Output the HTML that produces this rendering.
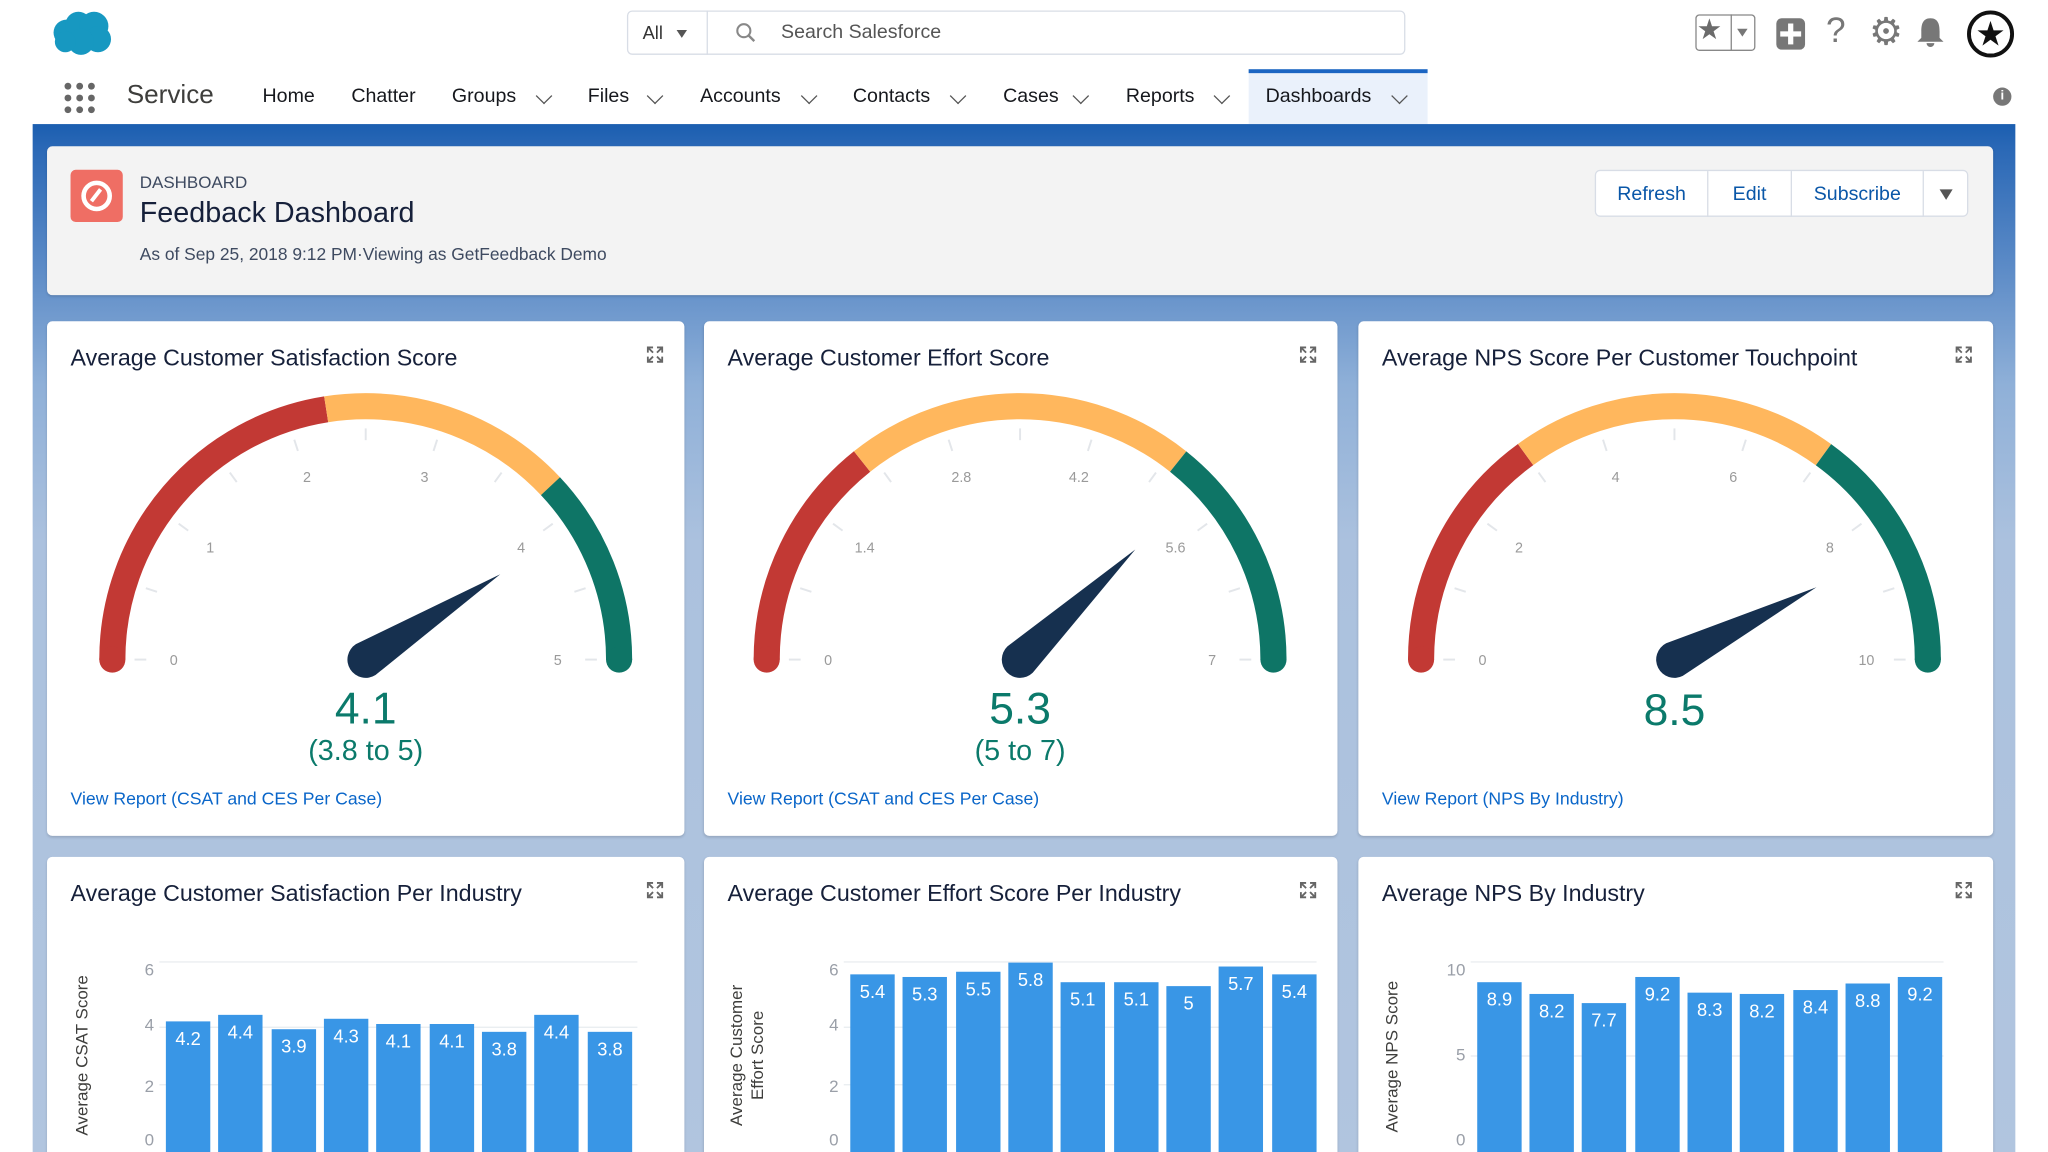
<!DOCTYPE html>
<html><head><meta charset="utf-8">
<style>
*{margin:0;padding:0;box-sizing:border-box}
html,body{width:2048px;height:1152px;overflow:hidden;background:#fff;font-family:"Liberation Sans",sans-serif}
#s{position:absolute;left:0;top:0;width:1568px;height:882px;transform:scale(1.30612);transform-origin:0 0;overflow:hidden;background:#fff}
.a{position:absolute;white-space:nowrap}
.nav{top:65px;font-size:15px;color:#16181d}
.chev{position:absolute;top:69px;width:9px;height:9px;border-right:1.6px solid #555;border-bottom:1.6px solid #555;transform:rotate(45deg)}
.card{position:absolute;background:#fff;border-radius:4px;box-shadow:0 1px 2px rgba(0,0,0,.15)}
.ttl{position:absolute;left:18px;top:18px;font-size:17.8px;color:#16203a}
.exp{position:absolute;top:19px;right:16px;width:13px;height:13px}
.lnk{position:absolute;left:18px;font-size:13.5px;color:#0a66c9}
.bar{position:absolute;width:34px;background:#3996e6;color:#fff;font-size:14px;text-align:center;padding-top:5px}
.yl{position:absolute;font-size:13px;color:#9a9fa8;text-align:right;width:20px}
.gl{position:absolute;height:1px;background:#e9ecf0}
.axt{position:absolute;font-size:13px;color:#3e3e3c;transform:rotate(-90deg);transform-origin:0 0;text-align:center;line-height:16px}
.btn{position:absolute;top:0;height:35px;line-height:35px;font-size:15px;color:#0a57a8;text-align:center}
</style></head><body><div id="s">
<svg class="a" style="left:38px;top:8px" width="50" height="36" viewBox="0 0 50 36"><g fill="#1798c1"><circle cx="13" cy="17" r="10"/><circle cx="22" cy="11" r="10"/><circle cx="34" cy="12" r="11"/><circle cx="37" cy="22" r="10"/><circle cx="24" cy="24" r="10"/><circle cx="12" cy="24" r="8"/></g></svg>
<div class="a" style="left:480px;top:8px;width:596px;height:34px;border:1px solid #d8dde6;border-radius:4px;background:#fff"></div>
<div class="a" style="left:541px;top:8px;width:1px;height:34px;background:#d8dde6"></div>
<div class="a" style="left:492px;top:17px;font-size:14px;color:#333">All</div>
<div class="a" style="left:518px;top:23px;width:0;height:0;border-left:4px solid transparent;border-right:4px solid transparent;border-top:6px solid #555"></div>
<svg class="a" style="left:563px;top:17px" width="16" height="16"><circle cx="6.5" cy="6.5" r="5" fill="none" stroke="#888" stroke-width="1.6"/><line x1="10" y1="10" x2="14.5" y2="14.5" stroke="#888" stroke-width="1.8"/></svg>
<div class="a" style="left:598px;top:16px;font-size:15px;color:#555">Search Salesforce</div>
<div class="a" style="left:1298px;top:11px;width:46px;height:28px;border:1px solid #888;border-radius:3px"></div>
<div class="a" style="left:1325px;top:11px;width:1px;height:28px;background:#888"></div>
<div class="a" style="left:1299px;top:10px;font-size:22px;color:#6b6b6b">★</div>
<div class="a" style="left:1330px;top:22px;border-left:4px solid transparent;border-right:4px solid transparent;border-top:6px solid #777"></div>
<div class="a" style="left:1360px;top:14px;width:22px;height:24px;background:#777;border-radius:4px"></div>
<div class="a" style="left:1369px;top:18px;width:4px;height:16px;background:#fff"></div>
<div class="a" style="left:1363px;top:24px;width:16px;height:4px;background:#fff"></div>
<div class="a" style="left:1398px;top:8px;font-size:27px;color:#777">?</div>
<div class="a" style="left:1431px;top:7px;font-size:29px;color:#777">⚙</div>
<svg class="a" style="left:1467px;top:13px" width="22" height="24"><path d="M11 1 C5 1 4 6 4 11 L4 16 L1 19 L21 19 L18 16 L18 11 C18 6 17 1 11 1Z M8 20 a3 3 0 0 0 6 0Z" fill="#777"/></svg>
<svg class="a" style="left:1505px;top:7px" width="38" height="38"><circle cx="19" cy="19" r="16.5" fill="#fff" stroke="#111" stroke-width="3"/><text x="19" y="28" text-anchor="middle" font-size="26" fill="#111">★</text></svg>
<svg class="a" style="left:49px;top:63px" width="24" height="24"><g fill="#666"><circle cx="3" cy="3" r="2.6"/><circle cx="12" cy="3" r="2.6"/><circle cx="21" cy="3" r="2.6"/><circle cx="3" cy="12" r="2.6"/><circle cx="12" cy="12" r="2.6"/><circle cx="21" cy="12" r="2.6"/><circle cx="3" cy="21" r="2.6"/><circle cx="12" cy="21" r="2.6"/><circle cx="21" cy="21" r="2.6"/></g></svg>
<div class="a" style="left:97px;top:62px;font-size:20px;color:#3e3e3c">Service</div>
<div class="a" style="left:956px;top:53px;width:137px;height:42px;background:#eaf1fb;border-top:3px solid #1b65c2"></div>
<div class="a nav" style="left:201px">Home</div>
<div class="a nav" style="left:269px">Chatter</div>
<div class="a nav" style="left:346px">Groups</div><div class="chev" style="left:412px"></div>
<div class="a nav" style="left:450px">Files</div><div class="chev" style="left:497px"></div>
<div class="a nav" style="left:536px">Accounts</div><div class="chev" style="left:615px"></div>
<div class="a nav" style="left:653px">Contacts</div><div class="chev" style="left:729px"></div>
<div class="a nav" style="left:768px">Cases</div><div class="chev" style="left:823px"></div>
<div class="a nav" style="left:862px">Reports</div><div class="chev" style="left:931px"></div>
<div class="a nav" style="left:969px">Dashboards</div><div class="chev" style="left:1067px"></div>
<div class="a" style="left:1526px;top:67px;width:14px;height:14px;border-radius:50%;background:#777;color:#fff;font-size:10px;font-weight:bold;text-align:center;line-height:14px">i</div>
<div class="a" style="left:25px;top:95px;width:1518px;height:800px;background:linear-gradient(#1b5eb0 0px,#2a68b6 18px,#5c8bc7 110px,#8fb0d8 200px,#abc1de 320px,#b1c5df 100%)"></div>
<div class="card" style="left:36px;top:112px;width:1490px;height:114px;background:#f3f3f3"></div>
<div class="a" style="left:54px;top:130px;width:40px;height:40px;background:#ef6e64;border-radius:4px"></div>
<svg class="a" style="left:54px;top:130px" width="40" height="40"><circle cx="20" cy="20" r="10" fill="none" stroke="#fff" stroke-width="3.5"/><path d="M16 24 L23 15" stroke="#fff" stroke-width="3"/></svg>
<div class="a" style="left:107px;top:132px;font-size:13px;color:#3e4a60">DASHBOARD</div>
<div class="a" style="left:107px;top:150px;font-size:22px;color:#16203a">Feedback Dashboard</div>
<div class="a" style="left:107px;top:187px;font-size:13.3px;color:#3e4a60">As of Sep 25, 2018 9:12 PM·Viewing as GetFeedback Demo</div>
<div class="a" style="left:1221px;top:130px;width:286px;height:36px;background:#fff;border:1px solid #d8dde6;border-radius:4px">
<div class="btn" style="left:0;width:85px">Refresh</div>
<div class="btn" style="left:85px;width:64px;border-left:1px solid #d8dde6">Edit</div>
<div class="btn" style="left:149px;width:101px;border-left:1px solid #d8dde6">Subscribe</div>
<div class="btn" style="left:250px;width:35px;border-left:1px solid #d8dde6"></div>
<div class="a" style="left:263px;top:14px;border-left:5px solid transparent;border-right:5px solid transparent;border-top:8px solid #555"></div>
</div>
<div class="card" style="left:36px;top:246px;width:488px;height:394px"><div class="ttl">Average Customer Satisfaction Score</div><svg class="exp" viewBox="0 0 13 13"><path d="M1 5V1h4M8 1h4v4M12 8v4H8M5 12H1V8M1 1l4 4M12 1L8 5M12 12L8 8M1 12l4-4" fill="none" stroke="#666" stroke-width="1.4"/></svg><div class="lnk" style="top:358px">View Report (CSAT and CES Per Case)</div></div>
<div class="card" style="left:539px;top:246px;width:485px;height:394px"><div class="ttl">Average Customer Effort Score</div><svg class="exp" viewBox="0 0 13 13"><path d="M1 5V1h4M8 1h4v4M12 8v4H8M5 12H1V8M1 1l4 4M12 1L8 5M12 12L8 8M1 12l4-4" fill="none" stroke="#666" stroke-width="1.4"/></svg><div class="lnk" style="top:358px">View Report (CSAT and CES Per Case)</div></div>
<div class="card" style="left:1040px;top:246px;width:486px;height:394px"><div class="ttl">Average NPS Score Per Customer Touchpoint</div><svg class="exp" viewBox="0 0 13 13"><path d="M1 5V1h4M8 1h4v4M12 8v4H8M5 12H1V8M1 1l4 4M12 1L8 5M12 12L8 8M1 12l4-4" fill="none" stroke="#666" stroke-width="1.4"/></svg><div class="lnk" style="top:358px">View Report (NPS By Industry)</div></div>
<svg class="a" style="left:0;top:0" width="1568" height="882">
<defs>
<g id="ticks" stroke="#e3e6ea" stroke-width="1.5">
<line x1="-177" y1="0" x2="-168" y2="0" transform="rotate(0)"/><line x1="-177" y1="0" x2="-168" y2="0" transform="rotate(18)"/><line x1="-177" y1="0" x2="-168" y2="0" transform="rotate(36)"/><line x1="-177" y1="0" x2="-168" y2="0" transform="rotate(54)"/><line x1="-177" y1="0" x2="-168" y2="0" transform="rotate(72)"/><line x1="-177" y1="0" x2="-168" y2="0" transform="rotate(90)"/><line x1="-177" y1="0" x2="-168" y2="0" transform="rotate(108)"/><line x1="-177" y1="0" x2="-168" y2="0" transform="rotate(126)"/><line x1="-177" y1="0" x2="-168" y2="0" transform="rotate(144)"/><line x1="-177" y1="0" x2="-168" y2="0" transform="rotate(162)"/><line x1="-177" y1="0" x2="-168" y2="0" transform="rotate(180)"/>
</g>
</defs>
<g font-family="Liberation Sans" font-size="11" fill="#9a9a9a" text-anchor="middle">
<g transform="translate(280,505)">
<use href="#ticks"/>
<g fill="none" stroke-width="20" transform="rotate(180)">
<circle r="194" stroke="#c23934" stroke-dasharray="274.3 3000"/>
<circle r="194" stroke="#ffb75d" stroke-dasharray="0 274.3 189 3000"/>
<circle r="194" stroke="#0e7566" stroke-dasharray="0 463.2 146.3 3000"/>
</g>
<circle cx="-194" cy="0" r="10" fill="#c23934"/><circle cx="194" cy="0" r="10" fill="#0e7566"/>
<text x="-147" y="4">0</text><text x="-119" y="-82">1</text><text x="-45" y="-136">2</text><text x="45" y="-136">3</text><text x="119" y="-82">4</text><text x="147" y="4">5</text>
<path d="M0 -14 L-122 0 L0 14 A14 14 0 0 0 0 -14Z" fill="#16304f" transform="rotate(147.6)"/>
<text y="49" font-size="34" fill="#0b7a6b">4.1</text>
<text y="77" font-size="22" fill="#0b7a6b">(3.8 to 5)</text>
</g>
<g transform="translate(781,505)">
<use href="#ticks"/>
<g fill="none" stroke-width="20" transform="rotate(180)">
<circle r="194" stroke="#c23934" stroke-dasharray="174.1 3000"/>
<circle r="194" stroke="#ffb75d" stroke-dasharray="0 174.1 261.3 3000"/>
<circle r="194" stroke="#0e7566" stroke-dasharray="0 435.4 174.1 3000"/>
</g>
<circle cx="-194" cy="0" r="10" fill="#c23934"/><circle cx="194" cy="0" r="10" fill="#0e7566"/>
<text x="-147" y="4">0</text><text x="-119" y="-82">1.4</text><text x="-45" y="-136">2.8</text><text x="45" y="-136">4.2</text><text x="119" y="-82">5.6</text><text x="147" y="4">7</text>
<path d="M0 -14 L-122 0 L0 14 A14 14 0 0 0 0 -14Z" fill="#16304f" transform="rotate(136.3)"/>
<text y="49" font-size="34" fill="#0b7a6b">5.3</text>
<text y="77" font-size="22" fill="#0b7a6b">(5 to 7)</text>
</g>
<g transform="translate(1282,505)">
<use href="#ticks"/>
<g fill="none" stroke-width="20" transform="rotate(180)">
<circle r="194" stroke="#c23934" stroke-dasharray="182.9 3000"/>
<circle r="194" stroke="#ffb75d" stroke-dasharray="0 182.9 243.8 3000"/>
<circle r="194" stroke="#0e7566" stroke-dasharray="0 426.7 182.9 3000"/>
</g>
<circle cx="-194" cy="0" r="10" fill="#c23934"/><circle cx="194" cy="0" r="10" fill="#0e7566"/>
<text x="-147" y="4">0</text><text x="-119" y="-82">2</text><text x="-45" y="-136">4</text><text x="45" y="-136">6</text><text x="119" y="-82">8</text><text x="147" y="4">10</text>
<path d="M0 -14 L-122 0 L0 14 A14 14 0 0 0 0 -14Z" fill="#16304f" transform="rotate(153)"/>
<text y="50" font-size="34" fill="#0b7a6b">8.5</text>
</g>
</g>
</svg>
<div class="card" style="left:36px;top:656px;width:488px;height:260px"><div class="ttl">Average Customer Satisfaction Per Industry</div><svg class="exp" viewBox="0 0 13 13"><path d="M1 5V1h4M8 1h4v4M12 8v4H8M5 12H1V8M1 1l4 4M12 1L8 5M12 12L8 8M1 12l4-4" fill="none" stroke="#666" stroke-width="1.4"/></svg></div>
<div class="card" style="left:539px;top:656px;width:485px;height:260px"><div class="ttl">Average Customer Effort Score Per Industry</div><svg class="exp" viewBox="0 0 13 13"><path d="M1 5V1h4M8 1h4v4M12 8v4H8M5 12H1V8M1 1l4 4M12 1L8 5M12 12L8 8M1 12l4-4" fill="none" stroke="#666" stroke-width="1.4"/></svg></div>
<div class="card" style="left:1040px;top:656px;width:486px;height:260px"><div class="ttl">Average NPS By Industry</div><svg class="exp" viewBox="0 0 13 13"><path d="M1 5V1h4M8 1h4v4M12 8v4H8M5 12H1V8M1 1l4 4M12 1L8 5M12 12L8 8M1 12l4-4" fill="none" stroke="#666" stroke-width="1.4"/></svg></div>
<div class="gl" style="left:122px;top:736px;width:366px"></div><div class="gl" style="left:122px;top:786px;width:366px"></div><div class="gl" style="left:122px;top:830px;width:366px"></div>
<div class="yl" style="left:98px;top:735px">6</div><div class="yl" style="left:98px;top:777px">4</div><div class="yl" style="left:98px;top:824px">2</div><div class="yl" style="left:98px;top:865px">0</div>
<div class="axt" style="left:55px;top:870px;width:124px">Average CSAT Score</div>
<div class="bar" style="left:127px;top:782px;height:100px">4.2</div>
<div class="bar" style="left:167px;top:777px;height:105px">4.4</div>
<div class="bar" style="left:208px;top:788px;height:94px">3.9</div>
<div class="bar" style="left:248px;top:780px;height:102px">4.3</div>
<div class="bar" style="left:288px;top:784px;height:98px">4.1</div>
<div class="bar" style="left:329px;top:784px;height:98px">4.1</div>
<div class="bar" style="left:369px;top:790px;height:92px">3.8</div>
<div class="bar" style="left:409px;top:777px;height:105px">4.4</div>
<div class="bar" style="left:450px;top:790px;height:92px">3.8</div>
<div class="gl" style="left:646px;top:736px;width:362px"></div><div class="gl" style="left:646px;top:786px;width:362px"></div><div class="gl" style="left:646px;top:830px;width:362px"></div>
<div class="yl" style="left:622px;top:735px">6</div><div class="yl" style="left:622px;top:777px">4</div><div class="yl" style="left:622px;top:824px">2</div><div class="yl" style="left:622px;top:865px">0</div>
<div class="axt" style="left:556px;top:868px;width:120px">Average Customer<br>Effort Score</div>
<div class="bar" style="left:651px;top:746px;height:136px">5.4</div>
<div class="bar" style="left:691px;top:748px;height:134px">5.3</div>
<div class="bar" style="left:732px;top:744px;height:138px">5.5</div>
<div class="bar" style="left:772px;top:737px;height:145px">5.8</div>
<div class="bar" style="left:812px;top:752px;height:130px">5.1</div>
<div class="bar" style="left:853px;top:752px;height:130px">5.1</div>
<div class="bar" style="left:893px;top:755px;height:127px">5</div>
<div class="bar" style="left:933px;top:740px;height:142px">5.7</div>
<div class="bar" style="left:974px;top:746px;height:136px">5.4</div>
<div class="gl" style="left:1126px;top:736px;width:362px"></div><div class="gl" style="left:1126px;top:808px;width:362px"></div>
<div class="yl" style="left:1102px;top:735px">10</div><div class="yl" style="left:1102px;top:800px">5</div><div class="yl" style="left:1102px;top:865px">0</div>
<div class="axt" style="left:1058px;top:868px;width:118px">Average NPS Score</div>
<div class="bar" style="left:1131px;top:752px;height:130px">8.9</div>
<div class="bar" style="left:1171px;top:761px;height:121px">8.2</div>
<div class="bar" style="left:1211px;top:768px;height:114px">7.7</div>
<div class="bar" style="left:1252px;top:748px;height:134px">9.2</div>
<div class="bar" style="left:1292px;top:760px;height:122px">8.3</div>
<div class="bar" style="left:1332px;top:761px;height:121px">8.2</div>
<div class="bar" style="left:1373px;top:758px;height:124px">8.4</div>
<div class="bar" style="left:1413px;top:753px;height:129px">8.8</div>
<div class="bar" style="left:1453px;top:748px;height:134px">9.2</div>
</div></body></html>
